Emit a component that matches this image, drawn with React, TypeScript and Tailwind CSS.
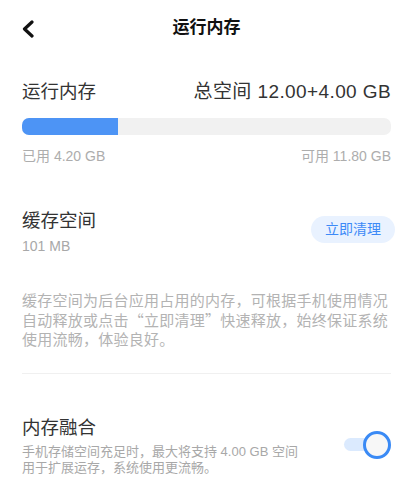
export default function App() {
  const font = "font-['Liberation_Sans','Noto_Sans_CJK_SC',sans-serif]";

  return (
    <div className={`w-[413px] h-[491px] overflow-hidden bg-white ${font}`}>
      <header className="relative flex h-[56px] items-center justify-center">
        <button type="button" className="absolute left-[20px] top-[20px]">
          <svg width="16" height="18" viewBox="0 0 16 18" fill="none">
            <polyline
              points="12,2 4.5,9 12,16"
              stroke="#111"
              strokeWidth="3.2"
              strokeLinecap="round"
              strokeLinejoin="round"
            />
          </svg>
        </button>
        <h1 className="text-[17px] font-bold text-[#111]">运行内存</h1>
      </header>

      <main className="px-[22px]">
        <section className="mt-[24px]">
          <div className="flex h-[24px] items-center justify-between text-[18.5px] text-[#333]">
            <span>运行内存</span>
            <span className="text-[19px] tracking-[0.4px]">总空间 12.00+4.00 GB</span>
          </div>
          <div className="mt-[14px] h-[17px] overflow-hidden rounded-[7px] bg-[#f1f1f1]">
            <div className="h-full w-[96px] bg-[#4d94f5]" />
          </div>
          <div className="mt-[12px] flex h-[18px] items-center justify-between text-[14px] text-[#adadad]">
            <span>已用 4.20 GB</span>
            <span>可用 11.80 GB</span>
          </div>
        </section>

        <section className="mt-[44px] flex items-start justify-between">
          <div>
            <h2 className="h-[24px] text-[18.5px] leading-[24px] text-[#333]">缓存空间</h2>
            <p className="mt-[4px] text-[14px] leading-[18px] text-[#a8a8a8]">101 MB</p>
          </div>
          <button
            type="button"
            className="-mr-[4px] mt-[7px] flex h-[27px] w-[84px] items-center justify-center rounded-full bg-[#e9f2ff] text-[14px] text-[#3d8af7]"
          >
            立即清理
          </button>
        </section>

        <p className="mt-[35px] font-['Noto_Sans_CJK_SC',sans-serif] text-[15px] leading-[19.5px] tracking-[0.25px] text-[#b3b3b3]">
          缓存空间为后台应用占用的内存，可根据手机使用情况自动释放或点击“立即清理”快速释放，始终保证系统使用流畅，体验良好。
        </p>

        <div className="mt-[24px] h-px bg-[#f0f0f0]" />

        <section className="mt-[42px] flex items-center justify-between">
          <div className="w-[282px]">
            <h2 className="h-[24px] text-[18.5px] leading-[24px] text-[#333]">内存融合</h2>
            <p className="mt-[4px] text-[13px] leading-[16px] text-[#a8a8a8]">
              手机存储空间充足时，最大将支持 4.00 GB 空间用于扩展运存，系统使用更流畅。
            </p>
          </div>
          <div className="relative -mt-[2px] h-[28px] w-[47px]">
            <div className="absolute left-0 top-[7.5px] h-[13px] w-[44px] rounded-full bg-[#dbeafe]" />
            <div className="absolute right-0 top-0 h-[28px] w-[28px] rounded-full border-[3px] border-[#3a8af5] bg-[#f7f7f7]" />
          </div>
        </section>
      </main>
    </div>
  );
}
